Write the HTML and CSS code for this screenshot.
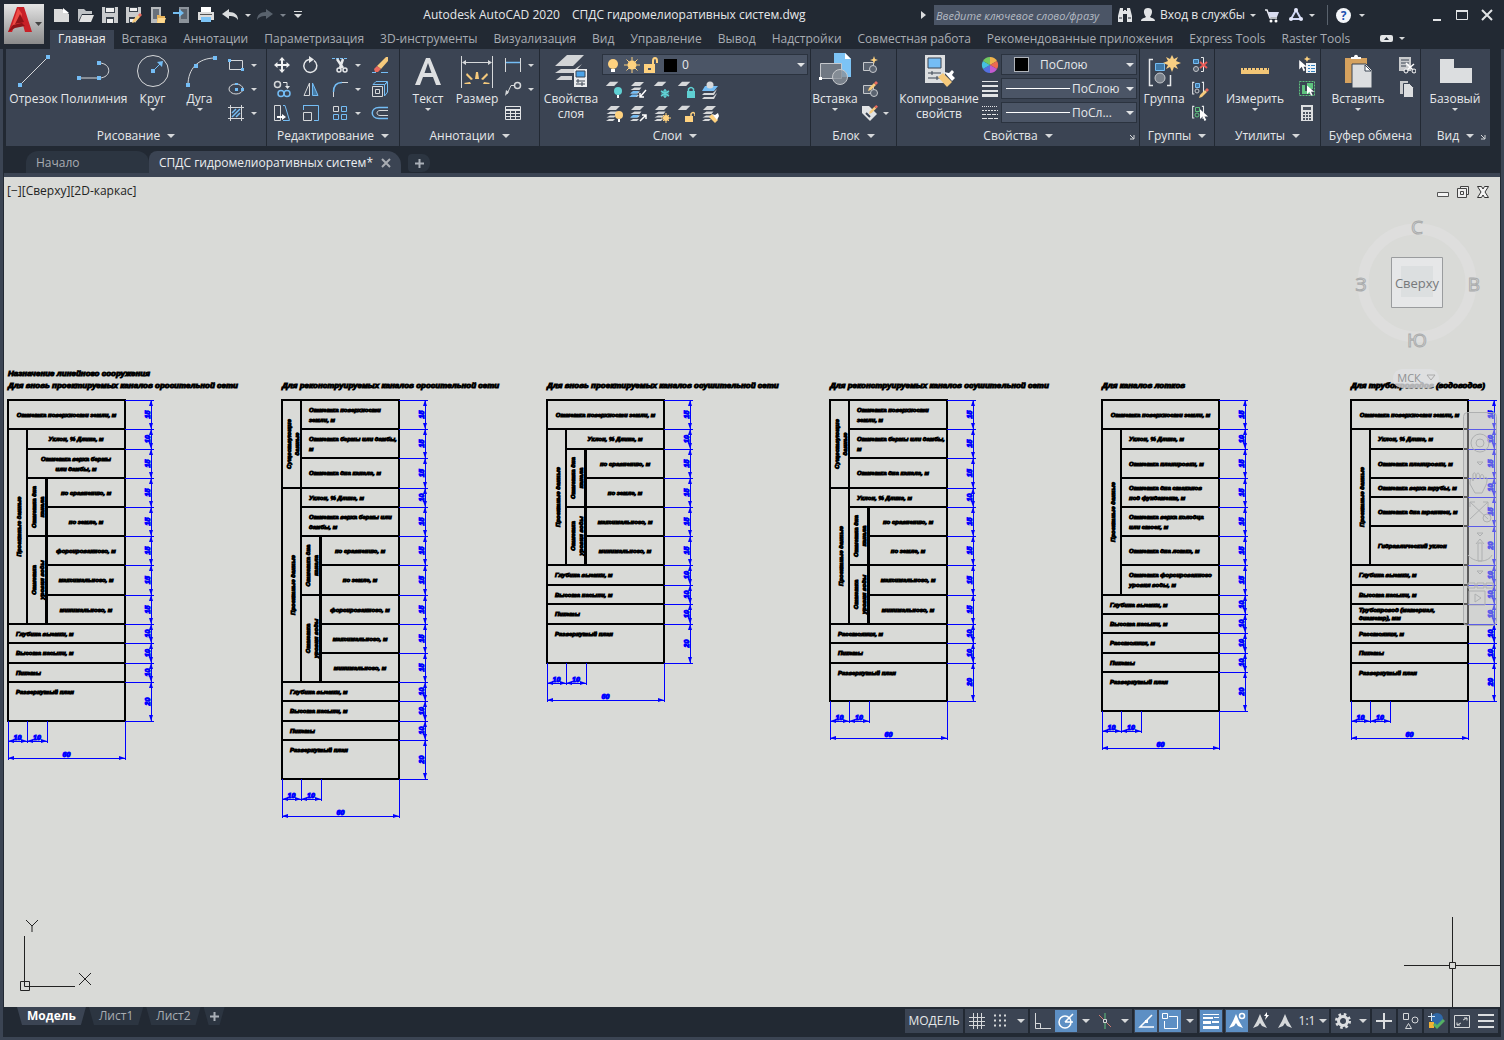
FILE: index.html
```html
<!DOCTYPE html>
<html lang="ru">
<head>
  <meta charset="UTF-8">
  <meta name="viewport" content="width=device-width, initial-scale=1.0">
  <title>Autodesk AutoCAD 2020</title>
  <link rel="stylesheet" href="styles.css">
</head>
<body>
  <svg class="defs" aria-hidden="true">
    <defs>
      <linearGradient id="silver" x1="0" y1="0" x2="0" y2="1"><stop offset="0" stop-color="#e4e4e4"/><stop offset="1" stop-color="#8a8a8a"/></linearGradient>
      <symbol id="stack" viewBox="0 0 18 18"><path d="M6 1h9l-4 4H2zM5.500 6.500h7l-2 2.500H1.500zM5 10.500h6l-2 2H1.500zM4 14h6l-2 2H1z" fill="#d6d8da"/></symbol>
      <symbol id="sheet" viewBox="0 0 18 18"><path d="M6 1h10l-5 5H1z" fill="#d6d8da"/></symbol>
      <symbol id="brackets" viewBox="0 0 18 18"><path d="M4 1H2v14h2M13 1h2v14h-2" fill="none" stroke="#e6e8ea" stroke-width="1.300"/></symbol>
      <symbol id="pencil" viewBox="0 0 10 10"><path d="M0 10l1-3 5-5 2 2-5 5z" fill="#f6ca7c"/><path d="M6 2l2-2 2 2-2 2z" fill="#ec6b5e"/></symbol>
      <symbol id="pointer" viewBox="0 0 10 14"><path d="M0 0v11l3-3 2 5 2-1-2-4h4z" fill="#fff"/></symbol>
    </defs>
  </svg>

  <header>
    <button class="logo" aria-label="Меню">
      <svg width="40" height="40" viewBox="0 0 40 40"><path fill="url(#silver)" d="M0 0h40v40H0z"/><path d="M13 3h7l8 25h-7l-2-7-9 2-2 5H4z" fill="#c92027"/><path d="M14 4l-6 18 8-3 2-9z" fill="#ef4b45"/><path d="M16 10l4 8-9 2zM4 28l5-7 9-2 3 3-10 2z" fill="#8e1318"/><path d="M31 18h7l-3.500 4z" fill="#444"/></svg>
    </button>
    <div class="titlebar">
      <div class="quick">
        <button aria-label="Создать"><svg width="18" height="18"><path d="M1 3h8l7 5v8H1z" fill="#dadada"/><path d="M10 2l6 5h-6z" fill="#fff"/></svg></button>
        <button aria-label="Открыть"><svg width="18" height="18"><path d="M1 16V3h6l2 2h6v3H5z" fill="#bfc2c5"/><path d="M5 9h12l-3 7H2z" fill="#e2e2e2"/></svg></button>
        <button aria-label="Сохранить"><svg width="18" height="18"><path d="M1 1h16v16H1z" fill="#c9cbcd"/><path d="M4 1h10v6H4zM5 11h8v6H5z" fill="#3a424c"/><path d="M5 2h8v4H5zM6 13h6v4H6z" fill="#efefef"/></svg></button>
        <button aria-label="Сохранить как"><svg width="18" height="18"><path d="M1 1h15v8l-6 8H1z" fill="#c9cbcd"/><path d="M4 1h9v5H4zM4 11h6v6H4z" fill="#3a424c"/><path d="M5 2h7v3H5zM5 13h4v3H5z" fill="#efefef"/><use href="#pencil" x="7" y="7" width="10" height="10"/></svg></button>
        <button aria-label="Открыть из облака"><svg width="18" height="18"><path d="M2 1h10v16H2z" fill="#b7babd"/><path d="M4 3h6v10H4z" fill="#69717b"/><path d="M8 9h3l1 1h4v7H8z" fill="#e8b45c"/><path d="M9 12h8l-2 5H8z" fill="#ffd98e"/></svg></button>
        <button aria-label="Сохранить в облаке"><svg width="18" height="18"><path d="M6 1h10v16H6z" fill="#8c939b"/><path d="M8 3h6v10H8z" fill="#5b636d"/><path d="M0 6h6V3l5 4-5 4V8H0z" fill="#74bdf0"/></svg></button>
        <button aria-label="Печать"><svg width="18" height="18"><path d="M4 1h10v5H4z" fill="#fff"/><path d="M1 6h16v8H1z" fill="#dcdcdc"/><path d="M3 8h12v1H3z" fill="#555"/><path d="M4 11h10v5H4z" fill="#7cc3f5"/></svg></button>
        <button aria-label="Отменить"><svg width="18" height="18"><path d="M1 8l7-5v3c6 0 9 3 9 8-2-3-4-4-9-4v3z" fill="#dadcde"/></svg></button>
        <button class="slim" aria-label="История отмен"><span class="caret"></span></button>
        <button aria-label="Повторить"><svg width="18" height="18"><path d="M17 8l-7-5v3c-6 0-9 3-9 8 2-3 4-4 9-4v3z" fill="#59626d"/></svg></button>
        <button class="slim" aria-label="История повторов"><span class="caret dim"></span></button>
        <button class="slim custom" aria-label="Настройка"><svg width="10" height="10"><path d="M1 1h8v1H1zM1 4h8L5 8z" fill="#d8dadc"/></svg></button>
      </div>
      <div class="title"><span>Autodesk AutoCAD 2020</span><span>СПДС гидромелиоративных систем.dwg</span></div>
      <div class="account">
        <svg width="5" height="8"><path d="M0 0l5 4-5 4z" fill="#dadcde"/></svg>
        <input class="search" type="text" placeholder="Введите ключевое слово/фразу" aria-label="Поиск">
        <button aria-label="Найти"><svg width="16" height="16"><path d="M3 1h3v3h1V3h2v1h1V1h3l2 8v6h-5V7H6v8H1V9z" fill="#e2e4e6"/><path d="M2 11h3M11 11h3" stroke="#222933" stroke-width="1"/></svg></button>
        <button class="login"><svg width="14" height="16"><path d="M7 1c5 0 5 5 2 9 1 1 5 1 5 4H0c0-3 4-3 5-4C2 6 2 1 7 1z" fill="#e2e4e6"/></svg>Вход в службы<span class="caret"></span></button>
        <button aria-label="Магазин"><svg width="16" height="16"><path d="M1 3h2l3 8h7" fill="none" stroke="#e8eaf0" stroke-width="1.500"/><path d="M4 5h11l-2 5H6z" fill="#d8dcf0"/><circle cx="7" cy="14" r="1.500" fill="#fff"/><circle cx="12" cy="14" r="1.500" fill="#fff"/></svg></button>
        <button class="app-store" aria-label="Приложения"><svg width="16" height="16"><path d="M8 3l5 9H3z" fill="none" stroke="#cfd6f5" stroke-width="2"/><circle cx="8" cy="3" r="2" fill="#e2e6fa"/><circle cx="3" cy="12" r="2" fill="#e2e6fa"/><circle cx="13" cy="12" r="2" fill="#e2e6fa"/></svg><span class="caret"></span></button>
        <button class="help" aria-label="Справка"><span class="question">?</span><span class="caret"></span></button>
      </div>
      <div class="window-buttons">
        <button aria-label="Свернуть"><svg width="14" height="14"><path d="M3 11h8v2H3z" fill="#e2e4e6"/></svg></button>
        <button aria-label="Развернуть"><svg width="14" height="14"><path d="M1.500 2.500h11v9h-11z" fill="none" stroke="#e2e4e6"/><path d="M1 2h12v2H1z" fill="#e2e4e6"/></svg></button>
        <button aria-label="Закрыть"><svg width="14" height="14"><path d="M2 2l10 10M12 2L2 12" stroke="#e2e4e6" stroke-width="2"/></svg></button>
      </div>
    </div>
    <nav class="tabs">
      <a class="active" href="#">Главная</a>
      <a href="#">Вставка</a>
      <a href="#">Аннотации</a>
      <a href="#">Параметризация</a>
      <a href="#">3D-инструменты</a>
      <a href="#">Визуализация</a>
      <a href="#">Вид</a>
      <a href="#">Управление</a>
      <a href="#">Вывод</a>
      <a href="#">Надстройки</a>
      <a href="#">Совместная работа</a>
      <a href="#">Рекомендованные приложения</a>
      <a href="#">Express Tools</a>
      <a href="#">Raster Tools</a>
      <button class="collapse" aria-label="Свернуть ленту"><svg width="13" height="7"><rect width="13" height="7" rx="2" fill="#e2e4e6"/><path d="M4 5l2.500-3L9 5z" fill="#222933"/></svg><span class="caret"></span></button>
    </nav>
  </header>

  <div class="ribbon">
    <section class="panel draw">
      <div class="tools">
        <button class="big line"><svg width="36" height="36"><path d="M4 32L32 4" stroke="#d6d8da"/><path d="M2 30h4v4H2zM30 2h4v4h-4z" fill="#74bdf5"/></svg>Отрезок</button>
        <button class="big pline"><svg width="36" height="36"><path d="M3 25h20c13 0 13-15 0-15" fill="none" stroke="#d6d8da"/><path d="M1 23h4v4H1zM21 23h4v4h-4zM21 8h4v4h-4z" fill="#74bdf5"/></svg>Полилиния</button>
        <button class="big circle"><svg width="36" height="36"><circle cx="18" cy="18" r="15.500" fill="none" stroke="#d6d8da"/><path d="M20 16l6-6" stroke="#74bdf5"/><path d="M16 16h4v4h-4zM22 9l6-1-1 6z" fill="#74bdf5"/></svg>Круг<span class="caret"></span></button>
        <button class="big arc"><svg width="36" height="36"><path d="M6 32C6 16 16 5 33 5" fill="none" stroke="#d6d8da"/><path d="M4 30h4v4H4zM12 11h4v4h-4zM31 3h4v4h-4z" fill="#74bdf5"/></svg>Дуга<span class="caret"></span></button>
        <div class="grid two">
          <button aria-label="Прямоугольник"><svg width="18" height="18"><path d="M2.500 4.500h13v9h-13z" fill="none" stroke="#d6d8da"/><path d="M1 3h3v3H1zM14 12h3v3h-3z" fill="#74bdf5"/></svg></button><span class="caret"></span>
          <button aria-label="Эллипс"><svg width="18" height="18"><ellipse cx="9" cy="9" rx="7" ry="5" fill="none" stroke="#d6d8da"/><path d="M8 8h3v3H8zM8 3h3v2H8zM14 8h3v3h-3z" fill="#74bdf5"/></svg></button><span class="caret"></span>
          <button aria-label="Штриховка"><svg width="18" height="18"><path d="M3.500 1v16M14.500 1v16M1 3.500h16M1 14.500h16" stroke="#d6d8da"/><path d="M5 9l4-4M5 13l8-8M9 13l4-4" stroke="#74bdf5" stroke-width="1.500"/></svg></button><span class="caret"></span>
        </div>
      </div>
      <h2>Рисование<span class="caret wide"></span></h2>
    </section>

    <section class="panel modify">
      <div class="tools">
        <div class="grid edit">
          <button aria-label="Перенести"><svg width="18" height="18"><path d="M9 1l3 3.500h-2V8h3.500V6L17 9l-3.500 3v-2H10v3.500h2L9 17l-3-3.500h2V10H4.500v2L1 9l3.500-3v2H8V4.500H6z" fill="#f0f1f2"/></svg></button>
          <button aria-label="Повернуть"><svg width="18" height="18"><path d="M12 4.500a6.500 6.500 0 1 1-5-1" fill="none" stroke="#e6e8ea" stroke-width="1.500"/><path d="M7 0l5 3.500L7 7z" fill="#e6e8ea"/></svg></button>
          <button aria-label="Обрезать"><svg width="18" height="18"><path d="M1 2.500h16" stroke="#74bdf5" stroke-dasharray="3 1"/><path d="M6 3l6 9M12 3L9 12" stroke="#e6e8ea" stroke-width="2.500"/><circle cx="8" cy="14" r="2" fill="none" stroke="#e6e8ea" stroke-width="1.500"/><circle cx="14" cy="14" r="2" fill="none" stroke="#e6e8ea" stroke-width="1.500"/></svg></button><span class="caret"></span>
          <button aria-label="Стереть"><svg width="18" height="18"><path d="M6 10L15 1h2v4l-7 8z" fill="#f6ca7c"/><path d="M3 13l3-3 4 3-3 3H4z" fill="#ec6b5e"/><path d="M1 16.500h4M10 16.500h7" stroke="#74bdf5"/></svg></button>
          <button aria-label="Копировать"><svg width="18" height="18"><circle cx="4.500" cy="4.500" r="3" fill="none" stroke="#d6d8da" stroke-width="1.500"/><path d="M10 2.500h4V7" fill="none" stroke="#e6e8ea"/><path d="M12 6h5l-2.500 3z" fill="#e6e8ea"/><circle cx="8" cy="13.500" r="3" fill="none" stroke="#74bdf5" stroke-width="1.500"/><circle cx="14" cy="13.500" r="3" fill="none" stroke="#74bdf5" stroke-width="1.500"/></svg></button>
          <button aria-label="Зеркало"><svg width="18" height="18"><path d="M7.500 3v12.500H2z" fill="none" stroke="#d6d8da"/><path d="M10.500 3v12.500H16z" fill="#467ba5" stroke="#74bdf5"/></svg></button>
          <button aria-label="Сопряжение"><svg width="18" height="18"><path d="M2.500 17v-5M11 2.500h6" stroke="#d6d8da"/><path d="M2.500 12c0-6 3-9.500 8.500-9.500" fill="none" stroke="#74bdf5" stroke-width="1.500"/></svg></button><span class="caret"></span>
          <button aria-label="Расчленить"><svg width="18" height="18"><path d="M1.500 6.500h10v10h-10zM4.500 9.500h4v4h-4z" fill="none" stroke="#d6d8da"/><path d="M2 4.500l3-3h11.500l-3 3zM13.500 5l3-3v10l-3 4z" fill="none" stroke="#74bdf5"/></svg></button>
          <button aria-label="Растянуть"><svg width="18" height="18"><path d="M1.500 1.500h6v15h-6z" fill="none" stroke="#d6d8da"/><path d="M10 1.500h2l4.500 15H10" fill="none" stroke="#74bdf5"/><path d="M4 12h5v-2l4 3-4 3v-2H4z" fill="#fff"/></svg></button>
          <button aria-label="Масштаб"><svg width="18" height="18"><path d="M1.500 8.500h8v8h-8z" fill="none" stroke="#d6d8da"/><path d="M2 1.500h14.500v15H12M1.500 1v5" fill="none" stroke="#74bdf5"/></svg></button>
          <button aria-label="Массив"><svg width="18" height="18"><path d="M2.500 2.500h5v5h-5z" fill="none" stroke="#d6d8da"/><path d="M10.500 2.500h5v5h-5zM2.500 10.500h5v5h-5zM10.500 10.500h5v5h-5z" fill="none" stroke="#74bdf5"/></svg></button><span class="caret"></span>
          <button aria-label="Подобие"><svg width="18" height="18"><path d="M17 3.500H8c-9 0-9 11 0 11h9" fill="none" stroke="#74bdf5" stroke-width="1.500"/><path d="M17 6.500H9c-4 0-4 5 0 5h8" fill="none" stroke="#d6d8da"/></svg></button>
        </div>
      </div>
      <h2>Редактирование<span class="caret wide"></span></h2>
    </section>

    <section class="panel annotate">
      <div class="tools">
        <button class="big mtext"><svg width="36" height="36"><path d="M5 32L16 5h4l11 27h-5l-3-8H13l-3 8zM14.500 20h7L18 10z" fill="#dcdee0"/></svg>Текст<span class="caret"></span></button>
        <button class="big dimension"><svg width="36" height="36"><path d="M2.500 3v32M33.500 3v32M4 9.500h28" stroke="#d6d8da"/><path d="M3 9.500L7 7v5zM33 9.500L29 7v5z" fill="#d6d8da"/><path d="M16 26l1-7h2l1 7zM12 27l-5-5 1-2 6 6zM24 27l5-5-1-2-6 6zM5 30l6-1 1 2H6zM31 30l-6-1-1 2h6z" fill="#f6ca7c"/></svg>Размер</button>
        <div class="grid two">
          <button aria-label="Линейный размер"><svg width="18" height="18"><path d="M1.500 2v14M16.500 2v14" stroke="#d6d8da"/><path d="M2 6.500h14" stroke="#74bdf5" stroke-width="1.500"/></svg></button><span class="caret"></span>
          <button aria-label="Выноска"><svg width="18" height="18"><circle cx="13.500" cy="5.500" r="3" fill="none" stroke="#d6d8da" stroke-width="1.500"/><path d="M10 5.500H7L3 14" fill="none" stroke="#d6d8da"/><path d="M1 16l1-6 3 2z" fill="#d6d8da"/></svg></button><span class="caret"></span>
          <button aria-label="Таблица"><svg width="18" height="18"><path d="M1.500 2.500h15v13h-15zM1.500 9.500h15M1.500 12.500h15M6.500 6v9M11.500 6v9" fill="none" stroke="#e2e4e6"/><path d="M1 5h16v2H1z" fill="#e2e4e6"/></svg></button>
        </div>
      </div>
      <h2>Аннотации<span class="caret wide"></span></h2>
    </section>

    <section class="panel layers">
      <div class="tools">
        <button class="big props"><svg width="36" height="36"><path d="M14 2h17L20 13H2zM8 16h14l7-5-8 9H2zM8 23h11v4H3z" fill="#d2d4d6"/><path d="M21 16h13v18H21z" fill="#eceef0"/><path d="M23 18h9v6h-9z" fill="#4ba3e8" stroke="#3b4453"/><path d="M23 28h9M23 31h9M25 26v4M29 29v4" stroke="#3b4453"/></svg>Свойства<br>слоя</button>
        <div class="stack">
          <div class="combo layer">
            <svg width="70" height="18"><circle cx="6" cy="8" r="5" fill="#ffd27f"/><path d="M4 13h4v3H4z" fill="#fff"/><circle cx="25" cy="9" r="4.500" fill="#ffd27f"/><path d="M25 1v16M17 9h16M19.500 3.500l11 11M30.500 3.500l-11 11" stroke="#ffd27f"/><path d="M37 8h11v9H37zM45 8V5q0-4 3-4t3 4v2h-2V5q0-2-1-2t-1 2v3z" fill="#ffd27f"/><path d="M41 12h3v2h-3z" fill="#4b5566"/><path d="M57 3h13v13H57z" fill="#000"/></svg>
            <select aria-label="Слой"><option>0</option></select>
          </div>
          <div class="grid five">
            <button aria-label="Отключить"><svg width="18" height="18"><use href="#sheet" width="15" height="15"/><circle cx="13" cy="10" r="4" fill="#5fd0d3"/><path d="M12 14h2v3h-2z" fill="#fff"/></svg></button>
            <button aria-label="Изолировать"><svg width="18" height="18"><use href="#stack" width="18" height="18"/><path d="M4 10h6l-2 2.500H1zM3 13.500h6l-2 2.500H0z" fill="#74bdf5"/><path d="M17 9l-6 7M11 12v4h4" fill="none" stroke="#fff" stroke-width="1.500"/></svg></button>
            <button aria-label="Заморозить"><svg width="18" height="18"><use href="#sheet" width="15" height="15"/><path d="M12 8v9M8 10l8 5M16 10l-8 5" stroke="#5fd0d3" stroke-width="1.500"/><circle cx="12" cy="12.500" r="3" fill="none" stroke="#5fd0d3"/></svg></button>
            <button aria-label="Блокировать"><svg width="18" height="18"><use href="#sheet" width="15" height="15"/><path d="M10 10h8v7h-8z" fill="#5fd0d3"/><path d="M11.500 10V8q2.500-3 5 0v2" fill="none" stroke="#5fd0d3" stroke-width="1.500"/></svg></button>
            <button aria-label="Сделать текущим"><svg width="18" height="18"><path d="M4 5h13l-4 5H1z" fill="#74bdf5"/><circle cx="9" cy="4" r="3.500" fill="#d6d8da"/><path d="M3 12h9l4-4-3 6H1zM3 16h9l4-4-3 6H1z" fill="#d6d8da"/></svg></button>
            <button aria-label="Включить все"><svg width="18" height="18"><use href="#stack" width="18" height="18"/><circle cx="14" cy="10" r="4" fill="#ffd27f"/><path d="M13 14h2v3h-2z" fill="#fff"/></svg></button>
            <button aria-label="Снять изоляцию"><svg width="18" height="18"><use href="#stack" width="18" height="18"/><path d="M4 10h6l-2 2.500H1z" fill="#74bdf5"/><path d="M11 16l6-6M13 10h4v4" fill="none" stroke="#fff" stroke-width="1.500"/></svg></button>
            <button aria-label="Разморозить все"><svg width="18" height="18"><use href="#stack" width="18" height="18"/><circle cx="13" cy="13" r="3" fill="#ffd27f"/><path d="M13 8v10M8 13h10M10 10l6 6M16 10l-6 6" stroke="#ffd27f"/></svg></button>
            <button aria-label="Разблокировать"><svg width="18" height="18"><use href="#sheet" width="15" height="15"/><path d="M8 11h8v6H8z" fill="#ffd27f"/><path d="M14 11V9q2-3 4 0v2" fill="none" stroke="#ffd27f" stroke-width="1.500"/></svg></button>
            <button aria-label="Копировать свойства слоя"><svg width="18" height="18"><use href="#stack" width="18" height="18"/><path d="M8 12l3-3 6 6-3 3z" fill="#ffd27f"/><path d="M11 9l3 1 3-2 1 3-2 4z" fill="#fff"/></svg></button>
          </div>
        </div>
      </div>
      <h2>Слои<span class="caret wide"></span></h2>
    </section>

    <section class="panel block">
      <div class="tools">
        <button class="big insert"><svg width="36" height="36"><path d="M17 0h11l6 6v18H17z" fill="#7cc3f5"/><path d="M28 0v6h6z" fill="#fff"/><path d="M3.500 10.500h21v15h-21z" fill="#707883" stroke="#c5c8cc"/><circle cx="23" cy="24" r="7.500" fill="#8a919a" fill-opacity=".8" stroke="#c5c8cc"/><path d="M2 24h3v3H2z" fill="#fff"/></svg>Вставка<span class="caret"></span></button>
        <div class="grid two">
          <button aria-label="Создать блок"><svg width="18" height="18"><path d="M2.500 6.500h10v8h-10z" fill="#59626f" stroke="#c5c8cc"/><circle cx="12" cy="13" r="3.500" fill="#59626f" stroke="#c5c8cc"/><path d="M13 0l1 3 3 1-3 1-1 3-1-3-3-1 3-1z" fill="#ffd27f"/></svg></button><span></span>
          <button aria-label="Редактор блоков"><svg width="18" height="18"><path d="M2.500 5.500h10v8h-10z" fill="#59626f" stroke="#c5c8cc"/><circle cx="13" cy="13" r="3.500" fill="#59626f" stroke="#c5c8cc"/><use href="#pencil" x="7" y="1" width="10" height="10"/></svg></button><span></span>
          <button aria-label="Атрибуты"><svg width="18" height="18"><path d="M1 2h7l8 8-7 7-8-8z" fill="#e2e4e6"/><path d="M5 9l4 4" stroke="#3b4453" stroke-width="2"/><use href="#pencil" x="8" y="1" width="9" height="9"/></svg></button><span class="caret"></span>
        </div>
      </div>
      <h2>Блок<span class="caret wide"></span></h2>
    </section>

    <section class="panel properties">
      <div class="tools">
        <button class="big match"><svg width="36" height="36"><path d="M4 2h20v28H4z" fill="#dcdee0"/><path d="M7 5h13v10H7z" fill="#74bdf5" stroke="#3b4453"/><path d="M7 20h13M7 25h13M11 18v4M16 23v4" stroke="#3b4453"/><path d="M17 24l5-4 9 9-5 5z" fill="#f6ca7c"/><path d="M23 19l5 1 3-3 2 2-2 3 3 3-3 3z" fill="#fff"/></svg>Копирование<br>свойств</button>
        <div class="marks">
          <svg width="18" height="24" viewBox="0 0 18 24"><path d="M9 12V4a8 8 0 0 1 7 4z" fill="#f0b44c"/><path d="M9 12l7-4a8 8 0 0 1 0 8z" fill="#ee6b50"/><path d="M9 12l7 4a8 8 0 0 1-7 4z" fill="#c45bd0"/><path d="M9 12v8a8 8 0 0 1-7-4z" fill="#5570e0"/><path d="M9 12l-7 4a8 8 0 0 1 0-8z" fill="#45c0e0"/><path d="M9 12L2 8a8 8 0 0 1 7-4z" fill="#72c860"/></svg>
          <svg width="18" height="24"><path d="M1 4h16v1H1zM1 8h16v2H1zM1 13h16v2H1zM1 17h16v3H1z" fill="#e2e4e6"/></svg>
          <svg width="18" height="24"><path d="M1 5.500h16" stroke="#e2e4e6" stroke-dasharray="1 1"/><path d="M1 9.500h16" stroke="#e2e4e6" stroke-dasharray="2 1"/><path d="M1 13.500h16" stroke="#e2e4e6" stroke-dasharray="4 1"/><path d="M1 17.500h16" stroke="#e2e4e6" stroke-dasharray="5 1"/></svg>
        </div>
        <div class="stack">
          <div class="combo"><span class="swatch"></span><select aria-label="Цвет"><option>ПоСлою</option></select></div>
          <div class="combo"><span class="rule"></span><select aria-label="Вес линий"><option>ПоСлою</option></select></div>
          <div class="combo"><span class="rule"></span><select aria-label="Тип линий"><option>ПоСл...</option></select></div>
        </div>
      </div>
      <h2>Свойства<span class="caret wide"></span></h2>
      <svg class="launch" width="6" height="6"><path d="M1 1l4 4M5 1v4H1" fill="none" stroke="#d6d8da"/></svg>
    </section>

    <section class="panel groups">
      <div class="tools">
        <button class="big group"><svg width="36" height="36"><path d="M7 6.500H3.500v26H7M21 32.500h3.500V22" fill="none" stroke="#e6e8ea" stroke-width="1.500"/><path d="M9.500 10.500h9v7h-9z" fill="#3f79a8" stroke="#74bdf5"/><circle cx="14" cy="25" r="5" fill="#7a818b" stroke="#c5c8cc"/><path d="M26 2l2 4 4-2-2 4 5 2-5 2 2 4-4-2-2 5-2-5-4 2 2-4-5-2 5-2-2-4 4 2z" fill="#f9cf82"/></svg>Группа</button>
        <div class="grid one">
          <button aria-label="Разгруппировать"><svg width="18" height="18"><path d="M2.500 3.500h5v4h-5z" fill="#3f79a8" stroke="#74bdf5"/><circle cx="5" cy="13" r="2.500" fill="#59626f" stroke="#c5c8cc"/><path d="M10 1.500h2.500v14H10" fill="none" stroke="#e6e8ea"/><path d="M9 6l7 6M16 6l-7 6" stroke="#ec5b55" stroke-width="2"/></svg></button>
          <button aria-label="Редактировать группу"><svg width="18" height="18"><use href="#brackets" width="15" height="18"/><path d="M4.500 3.500h4v4h-4z" fill="#3f79a8" stroke="#74bdf5"/><circle cx="6" cy="11" r="2" fill="none" stroke="#c5c8cc"/><use href="#pencil" x="8" y="8" width="10" height="10"/></svg></button>
          <button aria-label="Выбор групп"><svg width="18" height="18"><use href="#brackets" width="15" height="18"/><path d="M4.500 3.500h4v4h-4z" fill="none" stroke="#5fc27f"/><circle cx="6" cy="11" r="2" fill="none" stroke="#5fc27f"/><use href="#pointer" x="9" y="5" width="9" height="13"/></svg></button>
        </div>
      </div>
      <h2>Группы<span class="caret wide"></span></h2>
    </section>

    <section class="panel utils">
      <div class="tools">
        <button class="big measure"><svg width="36" height="36"><path d="M4 15h28v6H4z" fill="#f3c676"/><path d="M6.500 14v3M10.500 14v3M14.500 14v3M18.500 14v3M22.500 14v3M26.500 14v3M30.500 14v3" stroke="#3b4453"/></svg>Измерить<span class="caret"></span></button>
        <div class="grid one">
          <button aria-label="Быстрый выбор"><svg width="18" height="18"><path d="M8 7h10v10H8z" fill="#f0f2f4"/><path d="M10 9.500h2M13 9.500h4M10 12.500h2M13 12.500h4M10 15.500h2M13 15.500h4" stroke="#2f7fc0"/><use href="#pointer" x="1" y="4" width="9" height="12"/><path d="M9 0l1 2 3 1-3 1-1 2-1-2-2-1 2-1z" fill="#ffd27f"/></svg></button>
          <button aria-label="Выбрать все"><svg width="18" height="18"><path d="M1.500 1.500h15v14h-15z" fill="none" stroke="#5fc27f" stroke-dasharray="2 1"/><path d="M4 5h3v6h5v3H4zM9 3h6v6H9z" fill="#5fc27f"/><use href="#pointer" x="9" y="5" width="8" height="12"/></svg></button>
          <button aria-label="Калькулятор"><svg width="18" height="18"><path d="M3 1h12v16H3z" fill="#dcdee0"/><path d="M5 3h8v3H5zM5 8h2v2H5zM8 8h2v2H8zM11 8h2v2h-2zM5 11h2v2H5zM8 11h2v2H8zM11 11h2v2h-2zM5 14h2v2H5zM8 14h2v2H8zM11 14h2v2h-2z" fill="#4b5360"/></svg></button>
        </div>
      </div>
      <h2>Утилиты<span class="caret wide"></span></h2>
    </section>

    <section class="panel clipboard">
      <div class="tools">
        <button class="big paste"><svg width="36" height="36"><path d="M5 5h22v25H5z" fill="#d6a25e"/><path d="M11 6V4h3c0-3 4-3 4 0h3v2z" fill="#fff"/><path d="M12 11h14l6 6v18H12z" fill="#dcdee0" stroke="#3b4453"/><path d="M25 12v6h6z" fill="#fff" stroke="#3b4453"/></svg>Вставить<span class="caret"></span></button>
        <div class="grid one">
          <button aria-label="Вырезать"><svg width="18" height="18"><path d="M1 1h12v14H1z" fill="#c9cbcd"/><path d="M3 4h8M3 7h8M3 10h5" stroke="#3b4453"/><path d="M8 7l7 7M16 8l-7 6" stroke="#fff" stroke-width="1.500"/><circle cx="8" cy="15" r="2" fill="#3b4453" stroke="#fff"/><circle cx="16" cy="15" r="2" fill="#3b4453" stroke="#fff"/></svg></button>
          <button aria-label="Копировать в буфер"><svg width="18" height="18"><path d="M2 1h8v13H2z" fill="#c9cbcd"/><path d="M5.500 3.500h6l4 4v10h-10z" fill="#dcdee0" stroke="#3b4453"/></svg></button>
        </div>
      </div>
      <h2>Буфер обмена</h2>
    </section>

    <section class="panel view">
      <div class="tools">
        <button class="big base"><svg width="36" height="36"><path d="M3 6h14v9h18v15H3z" fill="#dcdee0"/></svg>Базовый<span class="caret"></span></button>
      </div>
      <h2>Вид<span class="caret wide"></span></h2>
      <svg class="launch" width="6" height="6"><path d="M1 1l4 4M5 1v4H1" fill="none" stroke="#d6d8da"/></svg>
    </section>
  </div>

  <div class="files">
    <a class="file start" href="#">Начало</a>
    <a class="file current" href="#">СПДС гидромелиоративных систем*<svg width="10" height="10"><path d="M1 1l8 8M9 1L1 9" stroke="#a9adb3" stroke-width="2"/></svg></a>
    <button class="add" aria-label="Новый чертеж"><svg width="9" height="9"><path d="M0 3.500h9v2H0zM3.500 0h2v9h-2z" fill="#aab0b8"/></svg></button>
  </div>

  <main class="viewport">
    <svg id="drawing" class="drawing"></svg>
    <div class="view-label">[−][Сверху][2D-каркас]</div>
    <div class="view-buttons">
      <svg width="12" height="12"><path d="M.500 6.500h11v4H.500z" fill="#f4f4f4" stroke="#555"/></svg>
      <svg width="12" height="12"><path d="M3.500.500h8v8h-8z" fill="#eee" stroke="#444"/><path d="M.500 2.500h9v9h-9z" fill="#eee" stroke="#444"/><path d="M3.500 5.500h3v3h-3z" fill="none" stroke="#444"/></svg>
      <svg width="12" height="12"><path d="M.500.500h4L6 3 7.500.500h4L8 6l3.500 5.500h-4L6 9l-1.500 2.500h-4L4 6z" fill="#f4f4f4" stroke="#333"/></svg>
    </div>
    <svg class="cube" width="140" height="180">
      <circle cx="70" cy="73" r="54" fill="none" stroke="#dededd" stroke-width="11"/>
      <path d="M44.500 47.500h51v50h-51z" fill="#e6e7e8" stroke="#9a9c9e"/>
      <path d="M54 56h32v31H54z" fill="#dcdfe0"/>
      <text class="face" x="70" y="78">Сверху</text>
      <g class="compass"><text x="70" y="24">С</text><text x="70" y="137">Ю</text><text x="14" y="81">З</text><text x="127" y="81">В</text></g>
      <rect x="46" y="159" width="46" height="19" rx="9" fill="#dfe0e2" fill-opacity=".8"/>
      <text class="wcs" x="62" y="172">МСК</text>
      <path d="M80 165h8l-4 5z" fill="none" stroke="#aaa"/>
    </svg>
    <svg class="navbar" width="34" height="214" fill="none" stroke="#aeb0b1">
      <rect x=".5" y=".5" width="33" height="213" rx="4" fill="#c9cacb" fill-opacity=".45"/>
      <circle cx="17" cy="31" r="9"/><circle cx="17" cy="31" r="4"/><path d="M14 50h6l-3 3z"/>
      <path d="M7 72c0-6 3-8 3-3v-7c2-3 3 0 3 5 0-8 4-8 4 0 0-6 4-6 4 0 3-4 4 0 2 6l-4 8h-7z"/>
      <path d="M7 90l18 17M25 90L7 107M7 95v-5h5M20 90h5v5"/><circle cx="24" cy="106" r="4"/><path d="M14 121h6l-3 3z"/>
      <path d="M15 131h4v18h-4zM13 132l4-5 4 5M5 143c6 8 20 8 24 0"/><path d="M14 159h6l-3 3z"/>
      <path d="M5 171h7v5H5zM14 171h7v5h-7zM23 171h7v5h-7zM6 179h16v14H6zM12 182v8l6-4z"/>
    </svg>
    <svg class="ucs" width="80" height="74" fill="none" stroke="#222">
      <path d="M5.500 17v50.500H56M1.500 62.500h9v9h-9zM7 1l6 6 6-6M13 7v6M60 54l12 12M72 54L60 66"/>
    </svg>
    <svg class="cross" width="96" height="90" fill="none" stroke="#222">
      <path d="M48.500 0v45M48.500 52v38M0 48.500h45M52 48.500h44M45.500 45.500h6v6h-6z"/>
    </svg>
  </main>

  <footer>
    <div class="layouts">
      <a class="active" href="#">Модель</a>
      <a href="#">Лист1</a>
      <a href="#">Лист2</a>
      <button aria-label="Новый лист"><svg width="9" height="9"><path d="M0 3.500h9v2H0zM3.500 0h2v9h-2z" fill="#aab0b8"/></svg></button>
    </div>
    <div class="status">
      <div class="cluster"><button class="model">МОДЕЛЬ</button></div>
      <div class="cluster">
        <button aria-label="Сетка"><svg width="18" height="18"><path d="M5.500 1v16M9.500 1v16M13.500 1v16M1 5.500h16M1 9.500h16M1 13.500h16" stroke="#d6d8da"/></svg></button>
        <button aria-label="Привязка"><svg width="18" height="18"><path d="M2 3.500h14M2 8.500h14M2 13.500h14" stroke="#d6d8da" stroke-width="2" stroke-dasharray="2 3"/></svg></button>
        <button class="arrow" aria-label="Настройка привязки"><span class="caret wide"></span></button>
      </div>
      <div class="cluster">
        <button aria-label="Орто"><svg width="18" height="18"><path d="M2.500 1v15.500H18M2.500 11.500h5v5" fill="none" stroke="#d6d8da"/></svg></button>
        <button class="on" aria-label="Полярное отслеживание"><svg width="18" height="18"><circle cx="8" cy="10" r="6" fill="none" stroke="#fff" stroke-width="1.500"/><path d="M8 10h8M8 10l8-8" stroke="#fff" stroke-width="1.500"/></svg></button>
        <button class="arrow" aria-label="Углы"><span class="caret wide"></span></button>
        <button aria-label="Изометрия"><svg width="18" height="18"><path d="M3 3l12 12" stroke="#d07a70"/><path d="M9 1v16" stroke="#5fc27f"/><path d="M7.500 7.500h3v3h-3z" fill="#3b4453" stroke="#d6d8da"/></svg></button>
        <button class="arrow" aria-label="Плоскости"><span class="caret wide"></span></button>
      </div>
      <div class="cluster">
        <button class="on" aria-label="Объектное отслеживание"><svg width="18" height="18"><path d="M15 3L3 15h14" fill="none" stroke="#fff" stroke-width="1.500"/><path d="M8 8h3v3H8z" fill="#fff"/></svg></button>
        <button class="on" aria-label="Объектная привязка"><svg width="18" height="18"><path d="M8 4.500h8.500v12h-13V9M1.500 1.500h5v5h-5z" fill="none" stroke="#fff"/></svg></button>
        <button class="arrow" aria-label="Режимы привязки"><span class="caret wide"></span></button>
      </div>
      <div class="cluster"><button class="on" aria-label="Вес линий"><svg width="18" height="18"><path d="M1 2h16v1H1zM1 5h10v2H1zM12 5h5v1h-5zM1 9h8v3H1zM10 9h7v2h-7zM1 14h16v3H1z" fill="#fff"/></svg></button></div>
      <div class="cluster">
        <button class="on" aria-label="Видимость аннотаций"><svg width="18" height="18"><path d="M8 2l3 7 4 7-5-2-2-3-2 3-5 2 4-7z" fill="#fff"/><circle cx="14" cy="4" r="2.500" fill="none" stroke="#fff" stroke-width="1.500"/></svg></button>
        <button aria-label="Автомасштаб"><svg width="18" height="18"><path d="M8 2l3 7 4 7-5-2-2-3-2 3-5 2 4-7z" fill="#d6d8da"/><path d="M15 0l-3 4h2l-1 4 4-5h-2z" fill="#fff"/></svg></button>
        <button aria-label="Масштаб аннотаций"><svg width="18" height="18"><path d="M9 2l3 7 4 7-5-2-2-3-2 3-5 2 4-7z" fill="#d6d8da"/></svg></button>
        <button class="scale">1:1<span class="caret wide"></span></button>
      </div>
      <div class="cluster">
        <button aria-label="Рабочее пространство"><svg width="18" height="18"><circle cx="9" cy="9" r="4.500" fill="none" stroke="#dcdee0" stroke-width="3"/><circle cx="9" cy="9" r="6.500" fill="none" stroke="#dcdee0" stroke-width="3" stroke-dasharray="2.500 2.600"/></svg></button>
        <button class="arrow" aria-label="Список пространств"><span class="caret wide"></span></button>
      </div>
      <div class="cluster"><button aria-label="Монитор аннотаций"><svg width="18" height="18"><path d="M8 1h2v7h7v2h-7v7H8v-7H1V8h7z" fill="#dcdee0"/></svg></button></div>
      <div class="cluster"><button aria-label="Изоляция объектов"><svg width="18" height="18"><path d="M2.500 1.500h5v6h-5zM4.500 16.500l3-5 3 5z" fill="none" stroke="#d6d8da"/><circle cx="14" cy="8" r="3" fill="none" stroke="#d6d8da"/></svg></button></div>
      <div class="cluster"><button aria-label="Производительность"><svg width="18" height="18"><circle cx="10" cy="7" r="6" fill="#2f68a8"/><path d="M4.500 1v8M1 4.500h7" stroke="#d7e6f5"/><path d="M2 10h5v6H2z" fill="#f2b233"/><path d="M7 12l3 3 7-7" fill="none" stroke="#55b064" stroke-width="3"/></svg></button></div>
      <div class="cluster">
        <button aria-label="Очистить экран"><svg width="18" height="18"><path d="M1.500 3.500h15v12h-15zM10 8l4-2M14 8.500V6h-3M8 11l-4 2M4 10.500V13h3" fill="none" stroke="#d6d8da"/></svg></button>
        <button aria-label="Адаптация"><svg width="18" height="18"><path d="M1 2h16v2H1zM1 8h16v2H1zM1 14h16v2H1z" fill="#dcdee0"/></svg></button>
      </div>
    </div>
  </footer>
  <script src="drawing.js"></script>
</body>
</html>
```

FILE: styles.css
```css
* { box-sizing: border-box; }
body { margin: 0; min-height: 100vh; display: flex; flex-direction: column; padding: 0 4px 4px; background: #222933; color: #e6e8ea; font: 12px/16px "Open Sans", "Noto Sans", sans-serif; box-shadow: inset 3px 0 #3b4453, inset -3px 0 #3b4453, inset 0 -3px #3b4453; }
button { display: flex; align-items: center; justify-content: center; padding: 0; border: 0; background: none; color: inherit; font: inherit; }
a { color: inherit; text-decoration: none; }
svg { flex: none; display: block; }
.defs { position: absolute; width: 0; height: 0; }
.caret { flex: none; width: 0; height: 0; border: 3px solid transparent; border-top-color: #d6d8da; border-bottom: 0; }
.caret.dim { border-top-color: #7d848d; }
.caret.wide { border-width: 4px; border-bottom: 0; }

/* title bar and ribbon tabs */
header { display: grid; grid-template-columns: 46px 1fr; grid-template-rows: 30px 19px; background: #222933; margin: 0 -4px; padding-left: 4px; }
.logo { grid-row: 1 / 3; align-self: start; margin-top: 4px; width: 40px; height: 40px; }
.titlebar { display: flex; align-items: center; padding-right: 5px; }
.quick { display: flex; }
.quick button { width: 24px; height: 28px; }
.quick .slim { width: 11px; }
.quick .custom { width: 20px; }
.title { flex: 1; display: flex; justify-content: center; gap: 12px; white-space: nowrap; }
.account { display: flex; align-items: center; gap: 8px; }
.search { width: 178px; height: 20px; padding: 0 2px; border: 0; background: #4b5566; color: #e6e8ea; font: italic 11px "Open Sans", sans-serif; }
.search::placeholder { color: #b4bac3; }
.account button { height: 20px; gap: 5px; }
.account .search { margin-right: -3px; }
.account .help { border-left: 1px solid #59626d; padding-left: 8px; margin-left: 4px; gap: 8px; }
.question { width: 15px; height: 15px; border-radius: 50%; background: #f4f6fa; color: #1c50b0; font-weight: bold; line-height: 15px; }
.window-buttons { display: flex; margin-left: 59px; }
.window-buttons button { width: 25px; height: 28px; }
.tabs { display: flex; white-space: nowrap; color: #a9adb3; }
.tabs a { padding: 0 8px; line-height: 17px; }
.tabs .active { background: #3b4453; color: #f0f1f2; }
.collapse { gap: 6px; margin-left: 22px; height: 17px; }

/* ribbon */
.ribbon { display: flex; gap: 1px; height: 97px; padding: 0 10px 0 2px; }
.panel { position: relative; display: flex; flex-direction: column; min-width: 0; padding-top: 4px; background: #3b4453; }
.draw { flex: 260 1 0; }
.modify { flex: 132 1 0; }
.annotate { flex: 139 1 0; }
.layers { flex: 270 1 0; }
.block { flex: 85 1 0; }
.properties { flex: 242 1 0; }
.groups { flex: 74 1 0; }
.utils { flex: 105 1 0; }
.clipboard { flex: 99 1 0; }
.view { flex: 69 1 0; }
.tools { display: flex; height: 73px; }
.panel h2 { display: flex; align-items: center; justify-content: center; gap: 7px; margin: 0; height: 20px; font-size: 12px; font-weight: normal; white-space: nowrap; }
.launch { position: absolute; right: 4px; bottom: 6px; }
.big { flex: none; flex-direction: column; justify-content: flex-start; white-space: nowrap; line-height: 15px; }
.big svg { margin-bottom: 2px; }
.big .caret { margin-top: 2px; }
.line { width: 55px; }
.pline { width: 66px; }
.circle { width: 51px; }
.arc { width: 43px; }
.mtext { width: 56px; }
.dimension { width: 42px; }
.props { width: 62px; }
.insert { width: 48px; }
.match { width: 84px; }
.group { width: 48px; }
.measure { width: 80px; }
.paste { width: 74px; }
.base { width: 68px; }
.grid { display: grid; grid-auto-rows: 24px; align-items: center; justify-items: center; align-content: start; }
.grid.two { grid-template-columns: 30px 6px; }
.block .grid.two { grid-template-columns: 22px 10px; }
.grid.edit { grid-template-columns: 29px 29px 30px 6px 38px; }
.grid.five { grid-template-columns: repeat(5, 24px); }
.grid.one { grid-template-columns: 24px; }
.stack { flex: 1; min-width: 0; padding-right: 2px; }
.marks { width: 18px; margin-right: 2px; }
.combo { position: relative; display: flex; align-items: center; height: 21px; margin: 1px 0 3px; border: 1px solid #2b333f; background: #4b5566; padding-left: 4px; }
.combo::after { content: ""; position: absolute; right: 2px; border: 4px solid transparent; border-top-color: #e2e4e6; border-bottom: 0; }
.combo select { flex: 1; min-width: 0; appearance: none; border: 0; padding: 0; background: none; color: #e6e8ea; font: 12px "Open Sans", sans-serif; }
.properties .combo { margin: 0 0 3px; }
.properties .combo:first-child { margin-top: 1px; }
.layer select { margin-left: 5px; }
.swatch { width: 15px; height: 15px; margin: 0 11px 0 8px; border: 1px solid #b0b4ba; background: #000; }
.rule { flex: none; width: 64px; height: 1px; margin-right: 2px; background: #fff; }

/* drawing tabs */
.files { display: flex; align-items: flex-end; height: 27px; padding-left: 22px; }
.file { display: flex; align-items: center; height: 22px; padding: 1px 10px 0; background: #2c3541; color: #a9adb3; border-radius: 12px 12px 0 0; white-space: nowrap; }
.start { width: 123px; }
.current { background: #3b4453; color: #eceef0; gap: 8px; border-radius: 8px 14px 0 0; }
.add { width: 22px; height: 18px; margin: 0 0 1px 7px; background: #2c3541; border-radius: 4px 8px 8px 4px; }

/* model space */
.viewport { position: relative; flex: 1; min-height: 400px; border-top: 4px solid #3b4453; background: #d9dad7; overflow: hidden; }
.drawing { position: absolute; width: 100%; height: 100%; }
.view-label { position: absolute; left: 3px; top: 6px; color: #222; }
.view-buttons { position: absolute; right: 11px; top: 9px; display: flex; gap: 8px; }
.cube { position: absolute; right: 13px; top: 33px; }
.cube text { text-anchor: middle; }
.face { font-size: 13px; fill: #77797b; }
.compass text { font-size: 19px; fill: #dededc; stroke: #aaacad; stroke-width: 1px; }
.wcs { font-size: 11px; fill: #8e9092; }
.navbar { position: absolute; right: 3px; top: 235px; }
.ucs { position: absolute; left: 15px; bottom: 14px; }
.cross { position: absolute; right: 0; bottom: 0; }

/* table strips */
.cell { fill: none; stroke: #000; stroke-width: 2px; }
.dim { stroke: #0000ff; stroke-width: 1px; fill: none; }
.tick { fill: #0000ff; }
.heading, .note, .size { font-family: "Liberation Sans Narrow", "Liberation Sans", sans-serif; font-style: italic; font-weight: bold; }
.heading { font-size: 8px; stroke: #000; stroke-width: 1px; }
.note { font-size: 6px; stroke: #000; stroke-width: 1px; }
.size { font-size: 7px; fill: #0000ff; stroke: #0000ff; stroke-width: 1px; text-anchor: middle; }
.middle { text-anchor: middle; }

/* layouts and status bar */
footer { display: flex; justify-content: space-between; height: 29px; }
.layouts { display: flex; gap: 3px; padding-left: 13px; color: #a9adb3; }
.layouts a, .layouts button { height: 18px; padding: 1px 10px 0; background: #2c3541; clip-path: polygon(0 0, 100% 0, calc(100% - 5px) 100%, 5px 100%); }
.layouts .active { background: #3b4453; color: #fff; font-weight: bold; }
.layouts button { padding: 0 6px; }
.status { display: flex; gap: 2px; padding: 2px 2px 3px 0; }
.cluster { display: flex; background: #3b4453; }
.cluster button { width: 24px; }
.cluster .on { background: #5d8fc4; border: 1px solid #3b4453; }
.cluster .arrow { width: 15px; }
.cluster .model { width: 58px; }
.cluster .scale { width: 32px; gap: 4px; }
```

FILE: drawing.js
```js
// paper millimetres to screen pixels
const K = 1.945;
const TOP = 223;
const svg = document.getElementById('drawing');

const px = mm => Math.round(mm * K);

// common rows: [height, column start, lines, centered]
const ground = [15, 0, ['Отметка поверхности земли, м'], true];
const slope = [10, 10, ['Уклон, % Длина, м'], true];
const slopeLeft = [10, 10, ['Уклон, % Длина, м']];
const bottom = [[15, 20, ['по сравнению, м'], true], [15, 20, ['по земле, м'], true]];
const forced = [15, 20, ['форсированного, м'], true];
const levels = [[15, 20, ['максимального, м'], true], [15, 20, ['минимального, м'], true]];
const depth = [10, 0, ['Глубина выемки, м']];
const height = [10, 0, ['Высота насыпи, м']];
const distance = [10, 0, ['Расстояния, м']];
const pickets = [10, 0, ['Пикеты']];
const plan = [20, 0, ['Развернутый план']];
const existing = [
  [15, 10, ['Отметка поверхности', 'земли, м']],
  [15, 10, ['Отметка бермы или дамбы,', 'м']],
  [15, 10, ['Отметка дна канала, м']]
];
const design = ['Проектные данные'];
const current = ['Существующие', 'данные'];
const bed = ['Отметка дна', 'канала'];
const water = ['Отметка', 'уровня воды'];

// groups: [column, from mm, to mm, lines]
const strips = [
  { x: 4, title: ['Назначение линейного сооружения', 'Для вновь проектируемых каналов оросительной сети'],
    rows: [ground, slope, [15, 10, ['Отметка верха бермы', 'или дамбы, м'], true], ...bottom, forced, ...levels, depth, height, pickets, plan],
    groups: [[0, 15, 115, design], [10, 40, 70, bed], [10, 70, 115, water]] },
  { x: 278, title: ['Для реконструируемых каналов оросительной сети'],
    rows: [...existing, slopeLeft, [15, 10, ['Отметка верха бермы или', 'дамбы, м']], ...bottom, forced, ...levels, depth, height, pickets, plan],
    groups: [[0, 0, 45, current], [0, 45, 145, design], [10, 70, 100, bed], [10, 100, 145, water]] },
  { x: 543, title: ['Для вновь проектируемых каналов осушительной сети'],
    rows: [ground, slope, ...bottom, ...levels, depth, height, pickets, plan],
    groups: [[0, 15, 85, design], [10, 25, 55, bed], [10, 55, 85, water]] },
  { x: 826, title: ['Для реконструируемых каналов осушительной сети'],
    rows: [...existing, slopeLeft, ...bottom, ...levels, distance, pickets, plan],
    groups: [[0, 0, 45, current], [0, 45, 115, design], [10, 55, 85, bed], [10, 85, 115, water]] },
  { x: 1098, title: ['Для каналов лотков'],
    rows: [ground, slopeLeft, [15, 10, ['Отметка планировки, м']], [15, 10, ['Отметка дна стаканов', 'под фундамент, м']],
      [15, 10, ['Отметка верха колодца', 'или стоек, м']], [15, 10, ['Отметка дна лотка, м']],
      [15, 10, ['Отметка форсированного', 'уровня воды, м']], depth, height, distance, pickets, plan],
    groups: [[0, 15, 100, design]] },
  { x: 1347, title: ['Для трубопроводов (водоводов)'],
    rows: [ground, slopeLeft, [15, 10, ['Отметка планировки, м']], [10, 10, ['Отметка верха трубы, м']],
      [15, 10, ['Отметка дна траншеи, м']], [20, 10, ['Гидравлический уклон'], false, true], depth, height,
      [10, 0, ['Трубопровод (материал,', 'диаметр), мм']], distance, pickets, plan],
    groups: [[0, 15, 85, design]] }
];

function add(tag, attrs, text) {
  const el = document.createElementNS('http://www.w3.org/2000/svg', tag);
  for (const name in attrs) el.setAttribute(name, attrs[name]);
  if (text) el.textContent = text;
  svg.appendChild(el);
}

function arrowsV(x, a, b) {
  add('path', { class: 'tick', d: `M${x} ${a}l-2 6h4zM${x} ${b}l-2-6h4z` });
}

function arrowsH(y, a, b) {
  add('path', { class: 'tick', d: `M${a} ${y}l6-2v4zM${b} ${y}l-6-2v4z` });
}

function sizeH(x, y, from, to, label) {
  const a = x + px(from), b = x + px(to);
  add('path', { class: 'dim', d: `M${a} ${y + .5}H${b}` });
  arrowsH(y, a, b);
  add('text', { class: 'size', x: (a + b) / 2, y: y - 1 }, label);
}

function drawStrip(s) {
  const right = s.x + px(60), line = s.x + 143;
  s.title.forEach((t, i) => add('text', { class: 'heading', x: s.x, y: TOP - 12 - (s.title.length - 1 - i) * 12 }, t));

  let mm = 0;
  for (const [h, col, lines, centered, middle] of s.rows) {
    const y = TOP + px(mm), bottom = TOP + px(mm + h), left = s.x + px(col);
    add('path', { class: 'cell', d: `M${left} ${y}H${right}V${bottom}H${left}z` });
    const mid = h === 20 && !middle ? y + 10 : (y + bottom) / 2;
    lines.forEach((t, i) => add('text', {
      class: centered ? 'note middle' : 'note',
      x: centered ? (left + right) / 2 : left + 8,
      y: mid + 2 + (i - (lines.length - 1) / 2) * (h === 10 ? 8 : 10)
    }, t));
    add('path', { class: 'dim', d: `M${right} ${y + .5}H${line + 3}M${right} ${bottom + .5}H${line + 3}M${line + .5} ${y}V${bottom}` });
    arrowsV(line, y, bottom);
    const c = (y + bottom) / 2;
    add('text', { class: 'size', x: line - 1, y: c, transform: `rotate(-90 ${line - 1} ${c})` }, h);
    mm += h;
  }

  for (const [col, from, to, lines] of s.groups) {
    const x = s.x + px(col), w = px(10), y = TOP + px(from), bottom = TOP + px(to);
    add('path', { class: 'cell', d: `M${x} ${y}h${w}V${bottom}h${-w}z` });
    const c = (y + bottom) / 2;
    lines.forEach((t, i) => {
      const tx = x + w / 2 + 3 + (i - (lines.length - 1) / 2) * 8;
      add('text', { class: 'note middle', x: tx, y: c, transform: `rotate(-90 ${tx} ${c})` }, t);
    });
  }

  const end = TOP + px(mm);
  add('path', { class: 'dim', d: `M${s.x + .5} ${end}v39M${s.x + px(10) + .5} ${end}v22M${s.x + px(20) + .5} ${end}v22M${right + .5} ${end}v39` });
  sizeH(s.x, end + 20, 0, 10, '10');
  sizeH(s.x, end + 20, 10, 20, '10');
  sizeH(s.x, end + 37, 0, 60, '60');
}

strips.forEach(drawStrip);
```
